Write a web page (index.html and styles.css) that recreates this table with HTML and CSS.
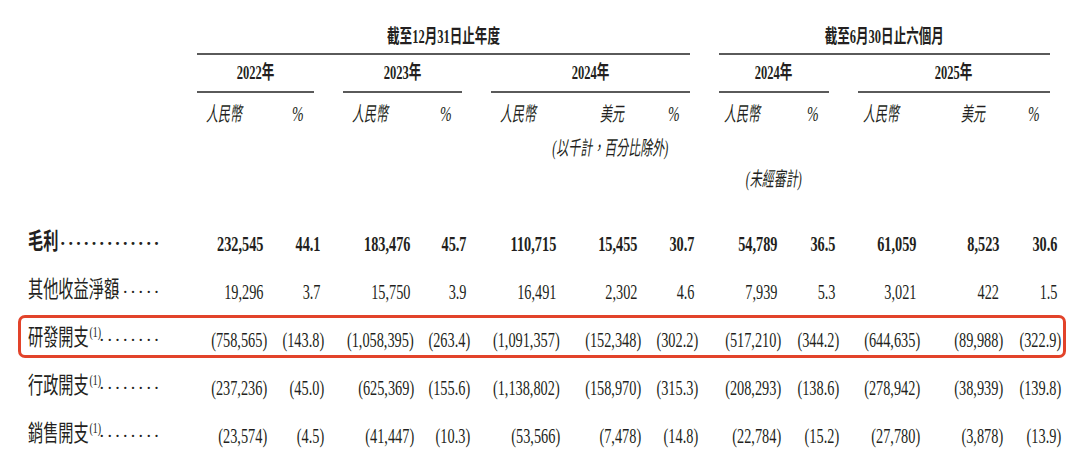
FILE: index.html
```html
<!DOCTYPE html>
<html lang="zh-Hant">
<head>
<meta charset="utf-8">
<title>損益表摘要</title>
<link rel="stylesheet" href="styles.css">
</head>
<body>
<div class="head">
  <div class="top top-fy"><span class="c">截至12月31日止年度</span></div>
  <div class="top top-hy"><span class="c">截至6月30日止六個月</span></div>

  <div class="yr col2"><span class="c">2022年</span></div>
  <div class="yr col3"><span class="c">2023年</span></div>
  <div class="yr col4"><span class="c">2024年</span></div>
  <div class="yr col5"><span class="c">2024年</span></div>
  <div class="yr col6"><span class="c">2025年</span></div>

  <div class="sub col2"><span class="c l">人民幣</span><span class="c r">%</span></div>
  <div class="sub col3"><span class="c l">人民幣</span><span class="c r">%</span></div>
  <div class="sub col4"><span class="c l">人民幣</span><span class="c m">美元</span><span class="c r">%</span></div>
  <div class="sub sub-h col5"><span class="c l">人民幣</span><span class="c r">%</span></div>
  <div class="sub sub-h col6"><span class="c l">人民幣</span><span class="c m">美元</span><span class="c r">%</span></div>

  <div class="note note-usd"><span class="c r">(以千計，百分比除外)</span></div>
  <div class="note note-ua col5"><span class="c">(未經審計)</span></div>
</div>

<div class="rows">
  <div class="row b">
    <div class="lbl"><span class="nm"><span class="cl">毛利</span></span><span class="dots">.............</span></div>
    <div class="n p"><span class="c">232,545</span></div>
    <div class="n p"><span class="c">44.1</span></div>
    <div class="n p"><span class="c">183,476</span></div>
    <div class="n p"><span class="c">45.7</span></div>
    <div class="n p"><span class="c">110,715</span></div>
    <div class="n p"><span class="c">15,455</span></div>
    <div class="n p"><span class="c">30.7</span></div>
    <div class="n p"><span class="c">54,789</span></div>
    <div class="n p"><span class="c">36.5</span></div>
    <div class="n p"><span class="c">61,059</span></div>
    <div class="n p"><span class="c">8,523</span></div>
    <div class="n p"><span class="c">30.6</span></div>
  </div>
  <div class="row">
    <div class="lbl"><span class="nm"><span class="cl">其他收益淨額</span></span><span class="dots">......</span></div>
    <div class="n p"><span class="c">19,296</span></div>
    <div class="n p"><span class="c">3.7</span></div>
    <div class="n p"><span class="c">15,750</span></div>
    <div class="n p"><span class="c">3.9</span></div>
    <div class="n p"><span class="c">16,491</span></div>
    <div class="n p"><span class="c">2,302</span></div>
    <div class="n p"><span class="c">4.6</span></div>
    <div class="n p"><span class="c">7,939</span></div>
    <div class="n p"><span class="c">5.3</span></div>
    <div class="n p"><span class="c">3,021</span></div>
    <div class="n p"><span class="c">422</span></div>
    <div class="n p"><span class="c">1.5</span></div>
  </div>
  <div class="row hl">
    <div class="lbl"><span class="nm"><span class="cl">研發開支<sup class="fn">(1)</sup></span></span><span class="dots">........</span></div>
    <div class="n"><span class="c">(758,565)</span></div>
    <div class="n"><span class="c">(143.8)</span></div>
    <div class="n"><span class="c">(1,058,395)</span></div>
    <div class="n"><span class="c">(263.4)</span></div>
    <div class="n"><span class="c">(1,091,357)</span></div>
    <div class="n"><span class="c">(152,348)</span></div>
    <div class="n"><span class="c">(302.2)</span></div>
    <div class="n"><span class="c">(517,210)</span></div>
    <div class="n"><span class="c">(344.2)</span></div>
    <div class="n"><span class="c">(644,635)</span></div>
    <div class="n"><span class="c">(89,988)</span></div>
    <div class="n"><span class="c">(322.9)</span></div>
  </div>
  <div class="row">
    <div class="lbl"><span class="nm"><span class="cl">行政開支<sup class="fn">(1)</sup></span></span><span class="dots">........</span></div>
    <div class="n"><span class="c">(237,236)</span></div>
    <div class="n"><span class="c">(45.0)</span></div>
    <div class="n"><span class="c">(625,369)</span></div>
    <div class="n"><span class="c">(155.6)</span></div>
    <div class="n"><span class="c">(1,138,802)</span></div>
    <div class="n"><span class="c">(158,970)</span></div>
    <div class="n"><span class="c">(315.3)</span></div>
    <div class="n"><span class="c">(208,293)</span></div>
    <div class="n"><span class="c">(138.6)</span></div>
    <div class="n"><span class="c">(278,942)</span></div>
    <div class="n"><span class="c">(38,939)</span></div>
    <div class="n"><span class="c">(139.8)</span></div>
  </div>
  <div class="row">
    <div class="lbl"><span class="nm"><span class="cl">銷售開支<sup class="fn">(1)</sup></span></span><span class="dots">........</span></div>
    <div class="n"><span class="c">(23,574)</span></div>
    <div class="n"><span class="c">(4.5)</span></div>
    <div class="n"><span class="c">(41,447)</span></div>
    <div class="n"><span class="c">(10.3)</span></div>
    <div class="n"><span class="c">(53,566)</span></div>
    <div class="n"><span class="c">(7,478)</span></div>
    <div class="n"><span class="c">(14.8)</span></div>
    <div class="n"><span class="c">(22,784)</span></div>
    <div class="n"><span class="c">(15.2)</span></div>
    <div class="n"><span class="c">(27,780)</span></div>
    <div class="n"><span class="c">(3,878)</span></div>
    <div class="n"><span class="c">(13.9)</span></div>
  </div>
</div>
</body>
</html>
```

FILE: styles.css
```css
* {
  box-sizing: border-box;
  margin: 0;
  padding: 0;
}

body {
  margin: 0;
  width: 1080px;
  height: 457px;
  overflow: hidden;
  background: #ffffff;
  color: #231f20;
  font-family: "Liberation Serif", "Noto Sans CJK TC", serif;
}

.c {
  display: inline-block;
  white-space: nowrap;
  transform: scaleX(0.7);
}

.c.l { transform-origin: 0 50%; }
.c.r { transform-origin: 100% 50%; }
.c.m { transform-origin: 50% 50%; }

/* ---------- header ---------- */
.head {
  display: grid;
  grid-template-columns: 168px 117px 119px 199px 110px 192px;
  column-gap: 29px;
}

.head > div {
  min-width: 0;
}

.col2 { grid-column: 2; }
.col3 { grid-column: 3; }
.col4 { grid-column: 4; }
.col5 { grid-column: 5; }
.col6 { grid-column: 6; }

.top {
  grid-row: 1;
  text-align: center;
  font-size: 19px;
  font-weight: bold;
  line-height: 20px;
  padding: 27px 0 6px;
  border-bottom: 2px solid #5a5a5a;
}

.top .c,
.yr .c {
  transform: scaleX(0.66);
}

.top-fy { grid-column: 2 / 5; }
.top-hy { grid-column: 5 / 7; }

.yr {
  grid-row: 2;
  text-align: center;
  font-size: 19px;
  font-weight: bold;
  line-height: 20px;
  padding: 8px 0;
  border-bottom: 2px solid #5a5a5a;
}

.sub {
  grid-row: 3;
  display: flex;
  justify-content: space-between;
  font-size: 20px;
  font-style: italic;
  line-height: 20px;
  padding: 11px 10px 0 9px;
}

.sub .c,
.note .c {
  transform: scaleX(0.6);
}

.sub .c.r {
  transform: scaleX(0.7);
}

.sub.sub-h {
  padding-left: 5px;
}

.note {
  font-size: 20px;
  font-style: italic;
  line-height: 20px;
}

.note-usd {
  grid-row: 4;
  grid-column: 3 / 5;
  text-align: right;
  padding: 14px 22px 0 0;
}

.note-ua {
  grid-row: 5;
  text-align: center;
  padding-top: 11px;
}

/* ---------- data rows ---------- */
.rows {
  margin: 30px 0 0 18px;
  width: 1048px;
  display: flex;
  flex-direction: column;
  gap: 5px;
}

.row {
  display: grid;
  grid-template-columns: 179px 70px 57px 90px 56px 90px 81px 57px 83px 58px 81px 83px 58px 5px;
  height: 43px;
}

.row.hl {
  outline: 3px solid #e2432a;
  outline-offset: -3px;
  border-radius: 7px;
}

.lbl {
  display: flex;
  align-items: center;
  padding: 0 35px 2px 10px;
  line-height: 41px;
  min-width: 0;
}

.nm {
  flex: 0 0 0;
  min-width: 0;
  width: 0;
  white-space: nowrap;
  font-family: "Noto Sans CJK TC", "Noto Sans CJK SC", sans-serif;
  font-size: 23px;
}

.cl {
  display: inline-block;
  transform: scaleX(0.66);
  transform-origin: 0 50%;
}

.fn {
  font-family: "Liberation Serif", serif;
  font-size: 15px;
  vertical-align: 8px;
  line-height: 0;
  margin-left: 1px;
}

.dots {
  margin-left: auto;
  font-family: "Liberation Serif", serif;
  font-size: 18px;
  letter-spacing: 3.3px;
  white-space: nowrap;
}

.n {
  display: flex;
  justify-content: flex-end;
  min-width: 0;
  font-size: 22px;
  line-height: 37px;
  padding-top: 6px;
}

.n .c {
  flex: none;
  transform: scaleX(0.65);
  transform-origin: 100% 50%;
}

.n.p {
  padding-right: 4px;
}

.row.b {
  font-weight: bold;
}
```
